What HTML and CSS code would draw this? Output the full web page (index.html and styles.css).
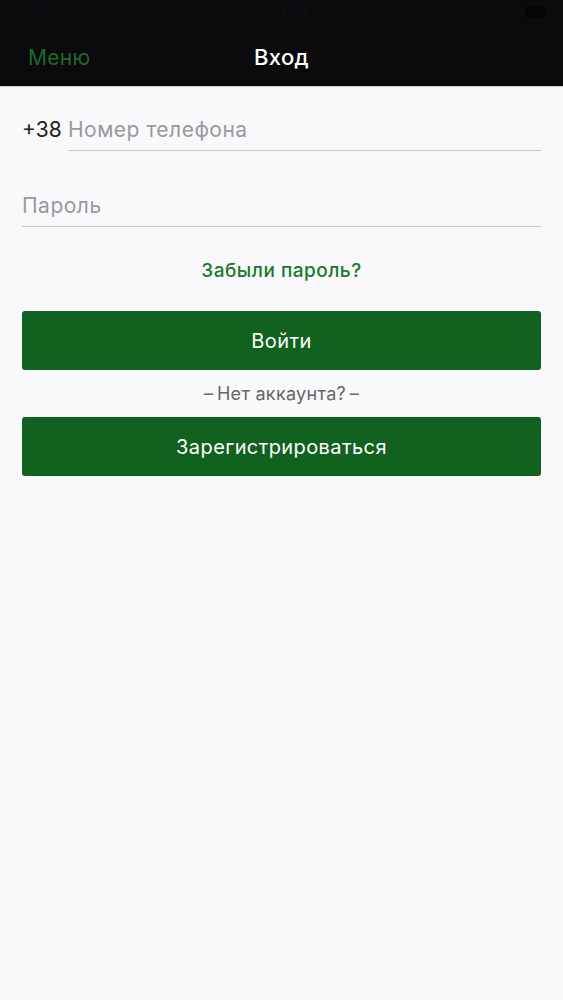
FILE: index.html
```html
<!DOCTYPE html>
<html lang="ru">
<head>
    <meta charset="UTF-8">
    <meta name="viewport" content="width=device-width, initial-scale=1.0">
    <title>Вход</title>
    <link rel="stylesheet" href="styles.css">
</head>
<body>
    <div class="top">
        <div class="status">
            <span class="carrier">Carrier &#8776;</span>
            <span class="clock">11:18</span>
            <span class="battery"></span>
        </div>
        <div class="navbar">
            <a class="nav-left" href="#">Меню</a>
            <span class="nav-title">Вход</span>
        </div>
    </div>
    <div class="container">
        <div class="field phone">
            <span class="prefix">+38</span>
            <input type="tel" placeholder="Номер телефона">
        </div>
        <div class="field">
            <input type="password" placeholder="Пароль">
        </div>
        <a class="forgot" href="#">Забыли пароль?</a>
        <button>Войти</button>
        <p class="divider">–&#8201;Нет аккаунта?&#8201;–</p>
        <button>Зарегистрироваться</button>
    </div>
</body>
</html>
```

FILE: styles.css
```css
body {
    font-family: Inter, "Liberation Sans", sans-serif;
    background-color: #f9f8fb;
    margin: 0;
    padding: 0;
}
.top {
    background-color: #0b0a0d;
    height: 86px;
    border-bottom: 1px solid #c9c8cc;
}
.status {
    height: 24px;
    display: flex;
    justify-content: space-between;
    align-items: center;
    padding: 0 10px 0 12px;
    font-size: 12px;
    color: #111015;
}
.battery {
    width: 20px;
    height: 12px;
    margin-right: 8px;
    background-color: #050406;
}
.navbar {
    position: relative;
    height: 62px;
    display: flex;
    align-items: center;
    justify-content: center;
    padding-top: 4px;
    box-sizing: border-box;
}
.nav-left {
    position: absolute;
    left: 28px;
    top: 21px;
    color: #1c6b2c;
    font-size: 21px;
    letter-spacing: 0.3px;
    text-decoration: none;
}
.nav-title {
    color: white;
    font-size: 22px;
    font-weight: 500;
    letter-spacing: 0.4px;
}
.container {
    padding: 0 22px;
}
.field {
    display: flex;
    align-items: flex-end;
    height: 64px;
    margin-top: 12px;
}
.field:first-child {
    margin-top: 0;
}
.prefix {
    font-size: 21px;
    color: #222;
    width: 46px;
    padding-bottom: 9px;
    line-height: 25px;
}
input {
    flex: 1;
    border: none;
    border-bottom: 1px solid #c8c8cc;
    background: transparent;
    font-family: inherit;
    font-size: 21px;
    letter-spacing: 0.5px;
    line-height: 25px;
    padding: 0 0 8px;
    outline: none;
}
input::placeholder {
    color: #9a999e;
}
.forgot {
    display: block;
    text-align: center;
    color: #1a7a2c;
    font-size: 19px;
    font-weight: 500;
    letter-spacing: 0.5px;
    text-decoration: none;
    margin-top: 32px;
}
button {
    width: 100%;
    height: 59px;
    background-color: #11621f;
    color: white;
    border: none;
    border-radius: 3px;
    font-family: inherit;
    font-size: 20px;
    letter-spacing: 0.4px;
    cursor: pointer;
}
.forgot + button {
    margin-top: 29px;
}
.divider {
    text-align: center;
    color: #666;
    font-size: 18px;
    letter-spacing: 0.3px;
    line-height: 21px;
    margin: 13px 0;
}
```
